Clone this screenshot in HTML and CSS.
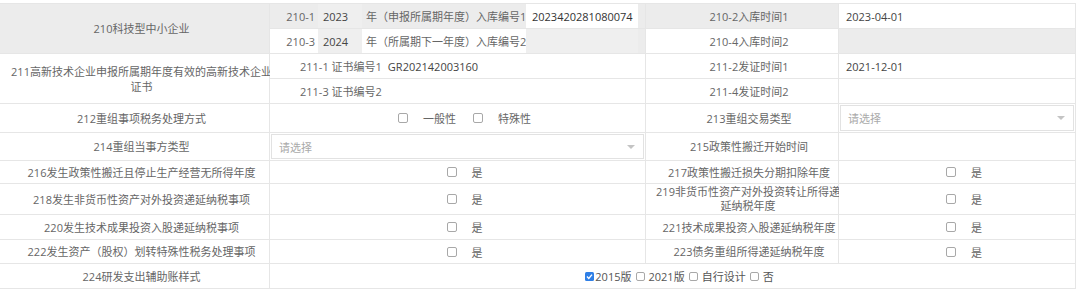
FILE: index.html
```html
<html>
<head>
<title>研发 / 高新 / 重组 信息</title>
<link rel="stylesheet" href="styles.css">
</head>
<body>
<div class="form">
	<!-- 210 -->
	<div class="lbl grey tall">210科技型中小企业</div>
	<div class="sub grey">
		<span class="code">210-1</span><span class="year">2023</span><span class="txt">年（申报所属期年度）入库编号1</span><span class="box">2023420281080074</span>
	</div>
	<div class="lbl grey">210-2入库时间1</div>
	<div class="val">2023-04-01</div>

	<div class="sub grey">
		<span class="code white">210-3</span><span class="year">2024</span><span class="txt white">年（所属期下一年度）入库编号2</span><span class="box grey"></span>
	</div>
	<div class="lbl">210-4入库时间2</div>
	<div class="val grey"></div>

	<!-- 211 -->
	<div class="lbl tall">
		<div class="nowrap">211高新技术企业申报所属期年度有效的高新技术企业</div>
		<div>证书</div>
	</div>
	<div class="sub cert"><span class="name">211-1 证书编号1</span><span class="value">GR202142003160</span></div>
	<div class="lbl">211-2发证时间1</div>
	<div class="val">2021-12-01</div>

	<div class="sub cert"><span class="name">211-3 证书编号2</span></div>
	<div class="lbl">211-4发证时间2</div>
	<div class="val"></div>

	<!-- 212 / 213 -->
	<div class="lbl">212重组事项税务处理方式</div>
	<div class="opts">
		<span class="cb"></span><span class="opt">一般性</span>
		<span class="cb second"></span><span class="opt">特殊性</span>
	</div>
	<div class="lbl">213重组交易类型</div>
	<div class="sel"><div class="selbox"><span>请选择</span><i class="arrow"></i></div></div>

	<!-- 214 / 215 -->
	<div class="lbl">214重组当事方类型</div>
	<div class="sel"><div class="selbox"><span>请选择</span><i class="arrow"></i></div></div>
	<div class="lbl">215政策性搬迁开始时间</div>
	<div class="val"></div>

	<!-- 216 - 223 -->
	<div class="lbl">216发生政策性搬迁且停止生产经营无所得年度</div>
	<div class="opts"><span class="cb"></span><span class="opt">是</span></div>
	<div class="lbl">217政策性搬迁损失分期扣除年度</div>
	<div class="opts"><span class="cb"></span><span class="opt">是</span></div>

	<div class="lbl">218发生非货币性资产对外投资递延纳税事项</div>
	<div class="opts"><span class="cb"></span><span class="opt">是</span></div>
	<div class="lbl two">
		<div class="nowrap">219非货币性资产对外投资转让所得递</div>
		<div>延纳税年度</div>
	</div>
	<div class="opts"><span class="cb"></span><span class="opt">是</span></div>

	<div class="lbl">220发生技术成果投资入股递延纳税事项</div>
	<div class="opts"><span class="cb"></span><span class="opt">是</span></div>
	<div class="lbl">221技术成果投资入股递延纳税年度</div>
	<div class="opts"><span class="cb"></span><span class="opt">是</span></div>

	<div class="lbl">222发生资产（股权）划转特殊性税务处理事项</div>
	<div class="opts"><span class="cb"></span><span class="opt">是</span></div>
	<div class="lbl">223债务重组所得递延纳税年度</div>
	<div class="opts"><span class="cb"></span><span class="opt">是</span></div>

	<!-- 224 -->
	<div class="lbl">224研发支出辅助账样式</div>
	<div class="versions">
		<svg class="checked" width="9" height="9" viewBox="0 0 9 9"><rect width="9" height="9" rx="1.5" fill="#2f7fe6"/><polyline points="2,4.6 3.8,6.4 7,2.6" fill="none" stroke="#fff" stroke-width="1.4"/></svg><span>2015版</span>
		<span class="cb small"></span><span>2021版</span>
		<span class="cb small"></span><span>自行设计</span>
		<span class="cb small"></span><span>否</span>
	</div>
</div>
</body>
</html>
```

FILE: styles.css
```css
html, body {
	margin: 0;
	background: #fff;
}
body {
	font-family: "Open Sans", "Noto Sans CJK SC", sans-serif;
	font-size: 11px;
	color: #666;
}
.form {
	display: grid;
	grid-template-columns: 269px 375px 192px 236px;
	grid-template-rows: 24px 24px 24px 24px 28px 27px 22px 30px 24px 23px 24px;
	gap: 1px;
	width: max-content;
	margin-top: 3px;
	padding: 1px 1px 1px 0;
	background: #e6e6e6;
}
.form > div {
	background: #fff;
	display: flex;
	align-items: center;
	min-width: 0;
	overflow: hidden;
}
.grey, .form > div.grey {
	background: #ececec;
}
.white {
	background: #fff;
}
.tall {
	grid-row: span 2;
}
.lbl {
	justify-content: center;
	text-align: center;
	padding-left: 14px;
	line-height: 15px;
}
.form > .lbl.tall, .form > .lbl.two {
	flex-direction: column;
	justify-content: center;
	overflow: visible;
}
.lbl.two {
	line-height: 14px;
	padding-left: 12px;
}
.nowrap {
	white-space: nowrap;
}
.val {
	padding-left: 7px;
	color: #444;
}

/* 210 rows */
.sub {
	align-items: stretch !important;
}
.sub > span {
	display: flex;
	align-items: center;
	white-space: nowrap;
}
.code {
	width: 48px;
	justify-content: flex-end;
	padding-right: 3px;
	box-sizing: border-box;
}
.year {
	width: 44px;
	padding-left: 5px;
	box-sizing: border-box;
	background: #efefef;
	color: #444;
}
.txt {
	width: 164px;
	padding-left: 4px;
	box-sizing: border-box;
}
.box {
	width: 112px;
	padding-left: 6px;
	box-sizing: border-box;
	background: #fff;
	color: #333;
}
.box.grey {
	background: #efefef;
}

/* 211 rows */
.form > .sub.cert {
	align-items: center !important;
	padding-left: 30px;
}
.cert .name {
	margin-right: 6px;
}
.cert .value {
	color: #444;
}

/* checkboxes */
.opts {
	justify-content: center;
	padding-left: 14px;
}
.cb {
	display: inline-block;
	width: 8px;
	height: 8px;
	border: 1px solid #a8a8a8;
	border-radius: 2px;
	background: #fff;
	flex: none;
}
.opt {
	margin-left: 15px;
}
.cb.second {
	margin-left: 17px;
}

/* selects */
.form > .sel {
	padding: 1px;
	align-items: stretch;
}
.selbox {
	flex: 1;
	display: flex;
	align-items: center;
	justify-content: space-between;
	border: 1px solid #e2e2e2;
	padding: 0 8px 0 7px;
	color: #aaa;
}
.arrow {
	width: 0;
	height: 0;
	border-left: 4px solid transparent;
	border-right: 4px solid transparent;
	border-top: 4px solid #c4c4c4;
}

/* 224 */
.versions {
	grid-column: span 3;
	justify-content: center;
	padding-left: 14px;
	color: #555;
}
.versions .checked {
	margin-right: 1px;
}
.cb.small {
	width: 7px;
	height: 7px;
	margin: 0 4px 0 4px;
}
```
